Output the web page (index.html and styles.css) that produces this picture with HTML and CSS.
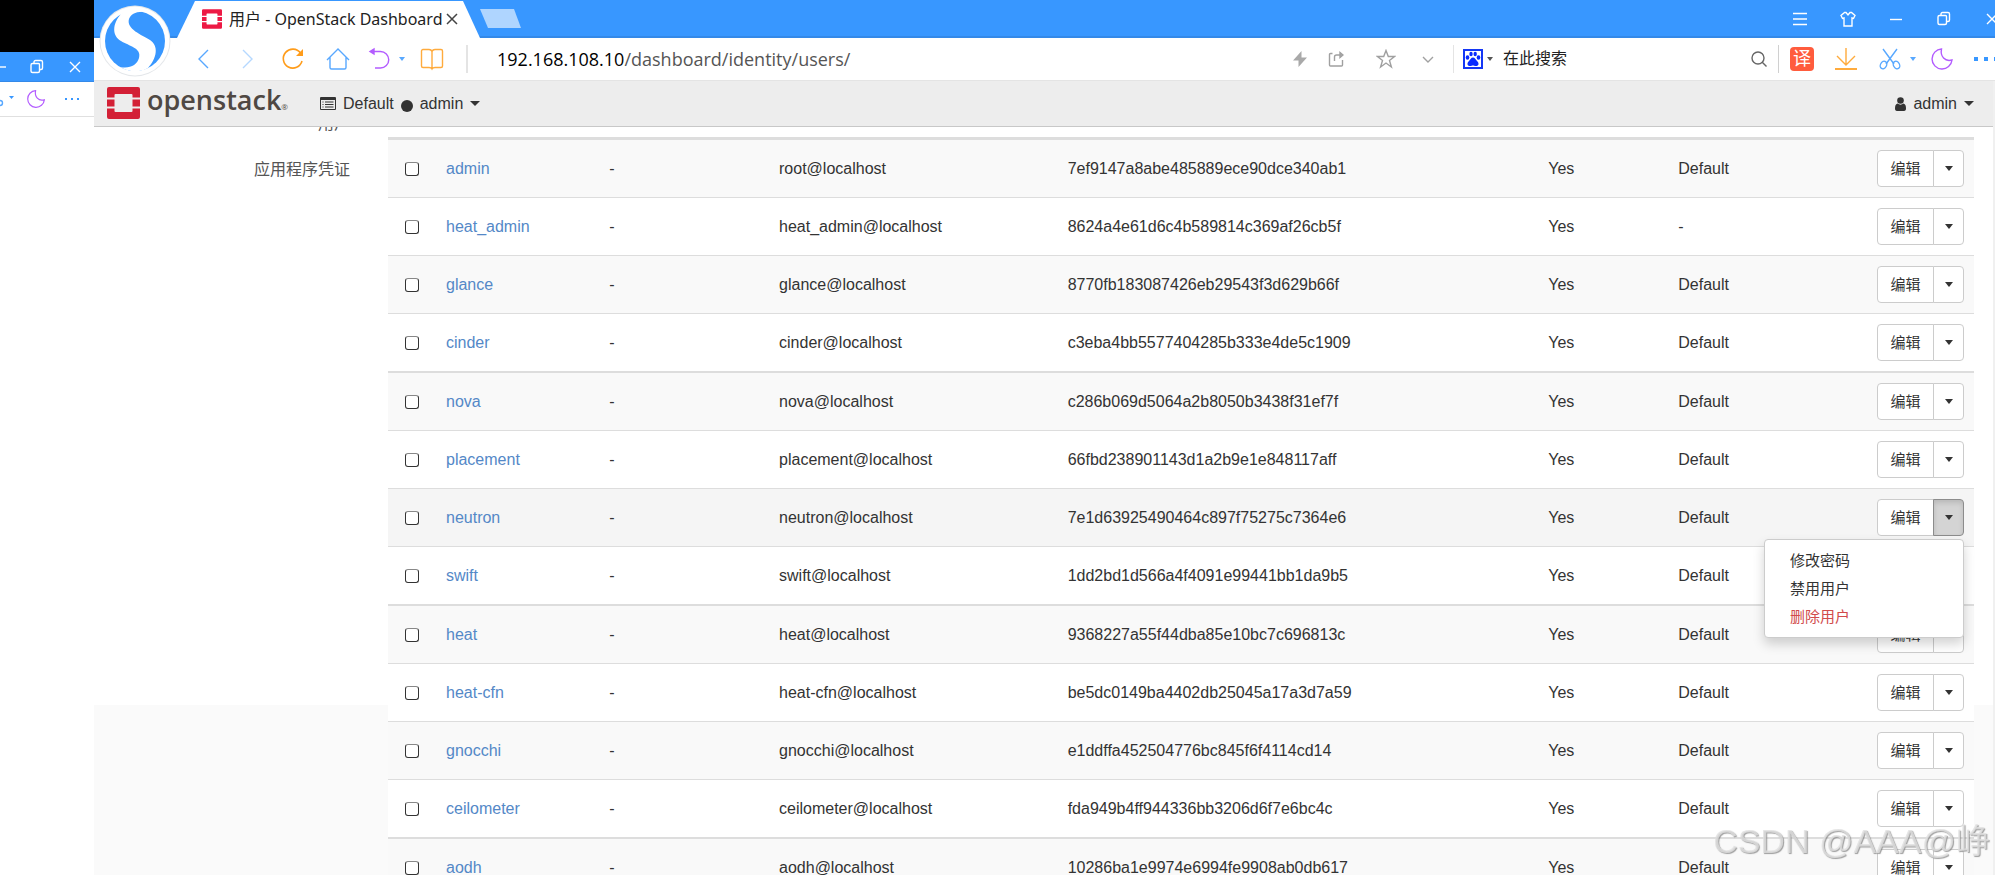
FILE: index.html
```
<!DOCTYPE html>
<html lang="zh-CN">
<head>
    <meta charset="UTF-8">
    <meta name="viewport" content="width=device-width, initial-scale=1.0">
    <title>用户 - OpenStack Dashboard</title>
    <link rel="stylesheet" href="styles.css">
</head>
<body>

<svg class="sprite" aria-hidden="true">
    <symbol id="i-restore" viewBox="0 0 16 16"><path d="M5 4V3a1.500 1.500 0 0 1 1.500-1.500H12A1.500 1.500 0 0 1 13.500 3v6a1.500 1.500 0 0 1-1.500 1.500h-1M3.500 4.500h6A1 1 0 0 1 10.500 5.500v6.500a1.500 1.500 0 0 1-1.500 1.500H3.500A1.500 1.500 0 0 1 2 12V6a1.500 1.500 0 0 1 1.500-1.500z"/></symbol>
    <symbol id="i-close" viewBox="0 0 16 16"><path d="M3 3l10 10M13 3L3 13"/></symbol>
    <symbol id="i-moon" viewBox="0 0 24 24"><path d="M11.500 2A10 10 0 1 0 22 13C15 15 10 9.500 11.500 2z"/></symbol>
    <symbol id="i-openstack" viewBox="0 0 33 32"><path d="M2 0h29a2 2 0 0 1 2 2v8.500h-7.500V8a1 1 0 0 0-1-1h-16a1 1 0 0 0-1 1v2.500H0V2a2 2 0 0 1 2-2zM0 12.500h7.500v7H0zM25.500 12.500H33v7h-7.500zM0 21.500h7.500V24a1 1 0 0 0 1 1h16a1 1 0 0 0 1-1v-2.500H33V30a2 2 0 0 1-2 2H2a2 2 0 0 1-2-2z"/></symbol>
</svg>

<!-- window behind -->
<aside class="back-window">
    <div class="back-desktop"></div>
    <div class="back-title">
        <svg class="line" width="16" height="16" viewBox="0 0 16 16"><path d="M0 8h15"/></svg>
        <svg class="line" width="16" height="16"><use href="#i-restore"/></svg>
        <svg class="line" width="16" height="16"><use href="#i-close"/></svg>
    </div>
    <div class="back-tools">
        <svg width="16" height="16" viewBox="0 0 16 16"><circle class="stroke-blue" cx="0" cy="12" r="2.500"/><path fill="#3897ff" d="M9 5h5l-2.500 3z"/></svg>
        <svg class="stroke-purple" width="20" height="20"><use href="#i-moon"/></svg>
        <svg class="fill-blue" width="16" height="16" viewBox="0 0 16 16"><path d="M1 7h2v2H1zM7 7h2v2H7zM13 7h2v2h-2z"/></svg>
    </div>
</aside>

<div class="browser">
    <header class="titlebar">
        <div class="tab">
            <svg width="20" height="20" fill="#ed1944"><use href="#i-openstack"/></svg>
            <span class="tab-title">用户 - OpenStack Dashboard</span>
            <button class="tab-close" aria-label="关闭标签页"><svg width="16" height="16"><use href="#i-close"/></svg></button>
        </div>
        <button class="new-tab" aria-label="新建标签页"></button>
        <div class="window-controls">
            <button aria-label="菜单"><svg class="line" width="16" height="16" viewBox="0 0 16 16"><path d="M1 2.500h14M1 8h14M1 13.500h14"/></svg></button>
            <button aria-label="皮肤"><svg class="line" width="16" height="16" viewBox="0 0 16 16"><path d="M4.500 1.500L1 4.500l1.500 3 1.500-.5v8h8V7l1.500.5 1.500-3-3.500-3h-1.500L8 4 6 1.500z"/></svg></button>
            <button aria-label="最小化"><svg class="line" width="16" height="16" viewBox="0 0 16 16"><path d="M2 8.500h12"/></svg></button>
            <button aria-label="还原"><svg class="line" width="16" height="16"><use href="#i-restore"/></svg></button>
            <button aria-label="关闭"><svg class="line" width="16" height="16"><use href="#i-close"/></svg></button>
        </div>
    </header>

    <svg class="browser-logo" viewBox="0 0 72 72">
        <circle cx="36" cy="36" r="35.500" fill="#e4e7ea"/>
        <circle cx="36" cy="36" r="34.500" fill="#fff"/>
        <circle cx="36" cy="36" r="30" fill="#3897ff"/>
        <path fill="#fff" d="M22 9C13 19 13 31 22 36c8 5 21 7 18 17-2 7-9 11-19 9 8 5 20 6 28 1C58 53 60 41 51 35 43 30 27 24 30 14c2-5 7-8 17-7C39 3 28 4 22 9z"/>
    </svg>

    <div class="toolbar">
        <nav class="tool-group">
            <button aria-label="后退"><svg class="stroke-blue" width="24" height="24" viewBox="0 0 24 24"><path d="M17 3L8 12l9 9"/></svg></button>
            <button aria-label="前进"><svg class="stroke-pale" width="24" height="24" viewBox="0 0 24 24"><path d="M7 3l9 9-9 9"/></svg></button>
            <button aria-label="刷新"><svg class="stroke-orange" width="24" height="24" viewBox="0 0 24 24"><path d="M19.500 6A9.500 9.500 0 1 0 21 14"/><path fill="#ff9c1a" stroke="none" d="M22 2v7h-7z"/></svg></button>
            <button aria-label="主页"><svg class="stroke-blue" width="24" height="24" viewBox="0 0 24 24"><path d="M1 13L12 2l11 11M4 10.500V20.500A1.500 1.500 0 0 0 5.500 22h13a1.500 1.500 0 0 0 1.500-1.500V10.500"/></svg></button>
            <button class="undo" aria-label="撤销"><svg class="stroke-purple" width="24" height="24" viewBox="0 0 24 24"><path d="M4 4.500h9.500a8 8 0 0 1 0 16.500H8"/><path fill="#b35cff" d="M7 2v5L3 4.500z"/></svg><i class="mini-caret"></i></button>
            <button aria-label="收藏夹"><svg class="stroke-gold" width="24" height="24" viewBox="0 0 24 24"><path d="M12 4.500C11.500 3 10.500 2.500 9 2.500H3A1.500 1.500 0 0 0 1.500 4v15A1.500 1.500 0 0 0 3 20.500h6c1.500 0 2.500.5 3 1.500.5-1 1.500-1.500 3-1.500h6a1.500 1.500 0 0 0 1.500-1.500V4A1.500 1.500 0 0 0 21 2.500h-6c-1.500 0-2.500.5-3 2zV22"/></svg></button>
        </nav>
        <div class="address" role="textbox" aria-label="地址">192.168.108.10<span>/dashboard/identity/users/</span></div>
        <div class="address-tools">
            <button aria-label="加速"><svg width="16" height="16" viewBox="0 0 16 16"><path fill="#a9a9a9" d="M9.500 0v6.500H15L6.500 16V9.500H1z"/></svg></button>
            <button aria-label="分享"><svg class="stroke-gray" width="16" height="16" viewBox="0 0 16 16"><path d="M4.500 2.500h-2a1 1 0 0 0-1 1V14a1 1 0 0 0 1 1h11a1 1 0 0 0 1-1V9M6.500 10V6a2 2 0 0 1 2-2H12"/><path fill="#a9a9a9" d="M12 1.500V6.500L15 4z"/></svg></button>
            <button aria-label="收藏"><svg class="stroke-gray" width="20" height="20" viewBox="0 0 20 20"><path d="M10 1.500l2.300 6H18.500l-5 4 1.900 6.500-5.400-4-5.400 4 1.900-6.500-5-4h6.200z"/></svg></button>
            <button aria-label="更多"><svg class="stroke-gray" width="16" height="16" viewBox="0 0 16 16"><path d="M3 6l5 5 5-5"/></svg></button>
        </div>
        <form class="search">
            <button type="button" class="engine" aria-label="搜索引擎"><svg width="20" height="20" viewBox="0 0 20 20"><path fill="#fff" stroke="#1437f5" stroke-width="2" d="M1 1h18v18H1z"/><g fill="#0a2cff"><ellipse cx="4.500" cy="8.500" rx="1.800" ry="2.200"/><ellipse cx="8" cy="5" rx="1.700" ry="2.200"/><ellipse cx="12.200" cy="5" rx="1.700" ry="2.200"/><ellipse cx="15.500" cy="8.500" rx="1.800" ry="2.200"/><path d="M10 8.500c2 0 2.500 2 4 3.500 3 3 1 5-1 5-1.500 0-2-.5-3-.5s-1.500.5-3 .5c-2 0-4-2-1-5 1.500-1.500 2-3.500 4-3.500z"/></g></svg><i class="mini-caret dark"></i></button>
            <input type="text" placeholder="在此搜索" aria-label="在此搜索">
            <button type="button" aria-label="搜索"><svg class="stroke-dark" width="16" height="16" viewBox="0 0 16 16"><circle cx="7" cy="7" r="6"/><path d="M11 11l4.500 4.500"/></svg></button>
        </form>
        <div class="extensions">
            <button class="translate">译</button>
            <button aria-label="下载"><svg class="stroke-gold" width="24" height="24" viewBox="0 0 24 24"><path d="M12 1v17M3 9l9 9 9-9"/><path stroke-width="2" d="M1 22h22"/></svg></button>
            <button aria-label="截图"><svg class="stroke-blue" width="24" height="24" viewBox="0 0 24 24"><path d="M5 2l11 15M19 2L8 17"/><ellipse cx="5.500" cy="18" rx="3" ry="4" transform="rotate(30 5.500 18)"/><ellipse cx="18.500" cy="18" rx="3" ry="4" transform="rotate(-30 18.500 18)"/></svg></button>
            <i class="mini-caret"></i>
            <button aria-label="夜间模式"><svg class="stroke-purple" width="24" height="24"><use href="#i-moon"/></svg></button>
            <button aria-label="更多工具"><svg class="fill-blue" width="24" height="24" viewBox="0 0 24 24"><path d="M0 10h4v4H0zM10 10h4v4h-4zM20 10h4v4h-4z"/></svg></button>
        </div>
    </div>

    <div class="page">
        <nav class="navbar">
            <a class="brand" href="#">
                <svg width="33" height="32" fill="#d32036"><use href="#i-openstack"/></svg>
                <span>openstack<small>®</small></span>
            </a>
            <button class="project">
                <svg width="16" height="13" viewBox="0 0 16 13"><path fill="#333" fill-rule="evenodd" d="M1 0h14a1 1 0 0 1 1 1v11a1 1 0 0 1-1 1H1a1 1 0 0 1-1-1V1a1 1 0 0 1 1-1zM1 3v9h14V3zM2.500 4.500h1v1h-1zM5 4.500h8.500v1H5zM2.500 7h1v1h-1zM5 7h8.500v1H5zM2.500 9.500h1v1h-1zM5 9.500h8.500v1H5z"/></svg>
                <span>Default</span><i class="dot"></i><span>admin</span><i class="caret"></i>
            </button>
            <button class="user">
                <svg width="11" height="14" viewBox="0 0 11 14"><circle cx="5.500" cy="3.500" r="3.300" fill="#333"/><path fill="#333" d="M2.500 6.500c2 1.500 4 1.500 6 0C10.500 7 11 9 11 11.500c0 1.500-.5 2.500-2 2.500H2c-1.500 0-2-1-2-2.500C0 9 .5 7 2.500 6.500z"/></svg>
                <span>admin</span><i class="caret"></i>
            </button>
        </nav>

        <div class="content">
            <ul class="side-menu">
                <li><a href="#">用户</a></li>
                <li><a href="#">应用程序凭证</a></li>
            </ul>
            <main>
                <table class="users">
                    <colgroup><col class="c-check"><col class="c-name"><col class="c-desc"><col class="c-mail"><col class="c-id"><col class="c-on"><col></colgroup>
                    <tbody>
                        <tr><td><input type="checkbox" aria-label="admin"></td><td><a href="#">admin</a></td><td>-</td><td>root@localhost</td><td>7ef9147a8abe485889ece90dce340ab1</td><td>Yes</td><td>Default</td><td><div class="actions"><button>编辑</button><button aria-label="更多操作"><i class="caret"></i></button></div></td></tr>
                        <tr><td><input type="checkbox" aria-label="heat_admin"></td><td><a href="#">heat_admin</a></td><td>-</td><td>heat_admin@localhost</td><td>8624a4e61d6c4b589814c369af26cb5f</td><td>Yes</td><td>-</td><td><div class="actions"><button>编辑</button><button aria-label="更多操作"><i class="caret"></i></button></div></td></tr>
                        <tr><td><input type="checkbox" aria-label="glance"></td><td><a href="#">glance</a></td><td>-</td><td>glance@localhost</td><td>8770fb183087426eb29543f3d629b66f</td><td>Yes</td><td>Default</td><td><div class="actions"><button>编辑</button><button aria-label="更多操作"><i class="caret"></i></button></div></td></tr>
                        <tr><td><input type="checkbox" aria-label="cinder"></td><td><a href="#">cinder</a></td><td>-</td><td>cinder@localhost</td><td>c3eba4bb5577404285b333e4de5c1909</td><td>Yes</td><td>Default</td><td><div class="actions"><button>编辑</button><button aria-label="更多操作"><i class="caret"></i></button></div></td></tr>
                        <tr><td><input type="checkbox" aria-label="nova"></td><td><a href="#">nova</a></td><td>-</td><td>nova@localhost</td><td>c286b069d5064a2b8050b3438f31ef7f</td><td>Yes</td><td>Default</td><td><div class="actions"><button>编辑</button><button aria-label="更多操作"><i class="caret"></i></button></div></td></tr>
                        <tr><td><input type="checkbox" aria-label="placement"></td><td><a href="#">placement</a></td><td>-</td><td>placement@localhost</td><td>66fbd238901143d1a2b9e1e848117aff</td><td>Yes</td><td>Default</td><td><div class="actions"><button>编辑</button><button aria-label="更多操作"><i class="caret"></i></button></div></td></tr>
                        <tr class="hovered"><td><input type="checkbox" aria-label="neutron"></td><td><a href="#">neutron</a></td><td>-</td><td>neutron@localhost</td><td>7e1d63925490464c897f75275c7364e6</td><td>Yes</td><td>Default</td><td>
                            <div class="actions open">
                                <button>编辑</button><button aria-label="更多操作" aria-expanded="true"><i class="caret"></i></button>
                                <ul class="dropdown">
                                    <li><a href="#">修改密码</a></li>
                                    <li><a href="#">禁用用户</a></li>
                                    <li><a class="danger" href="#">删除用户</a></li>
                                </ul>
                            </div>
                        </td></tr>
                        <tr><td><input type="checkbox" aria-label="swift"></td><td><a href="#">swift</a></td><td>-</td><td>swift@localhost</td><td>1dd2bd1d566a4f4091e99441bb1da9b5</td><td>Yes</td><td>Default</td><td><div class="actions"><button>编辑</button><button aria-label="更多操作"><i class="caret"></i></button></div></td></tr>
                        <tr><td><input type="checkbox" aria-label="heat"></td><td><a href="#">heat</a></td><td>-</td><td>heat@localhost</td><td>9368227a55f44dba85e10bc7c696813c</td><td>Yes</td><td>Default</td><td><div class="actions"><button>编辑</button><button aria-label="更多操作"><i class="caret"></i></button></div></td></tr>
                        <tr><td><input type="checkbox" aria-label="heat-cfn"></td><td><a href="#">heat-cfn</a></td><td>-</td><td>heat-cfn@localhost</td><td>be5dc0149ba4402db25045a17a3d7a59</td><td>Yes</td><td>Default</td><td><div class="actions"><button>编辑</button><button aria-label="更多操作"><i class="caret"></i></button></div></td></tr>
                        <tr><td><input type="checkbox" aria-label="gnocchi"></td><td><a href="#">gnocchi</a></td><td>-</td><td>gnocchi@localhost</td><td>e1ddffa452504776bc845f6f4114cd14</td><td>Yes</td><td>Default</td><td><div class="actions"><button>编辑</button><button aria-label="更多操作"><i class="caret"></i></button></div></td></tr>
                        <tr><td><input type="checkbox" aria-label="ceilometer"></td><td><a href="#">ceilometer</a></td><td>-</td><td>ceilometer@localhost</td><td>fda949b4ff944336bb3206d6f7e6bc4c</td><td>Yes</td><td>Default</td><td><div class="actions"><button>编辑</button><button aria-label="更多操作"><i class="caret"></i></button></div></td></tr>
                        <tr><td><input type="checkbox" aria-label="aodh"></td><td><a href="#">aodh</a></td><td>-</td><td>aodh@localhost</td><td>10286ba1e9974e6994fe9908ab0db617</td><td>Yes</td><td>Default</td><td><div class="actions"><button>编辑</button><button aria-label="更多操作"><i class="caret"></i></button></div></td></tr>
                    </tbody>
                </table>
            </main>
        </div>
    </div>
</div>

<div class="watermark">CSDN @AAA@峥</div>

</body>
</html>
```
FILE: styles.css
```
* {
    box-sizing: border-box;
}

body {
    font-family: "Liberation Sans", "Noto Sans CJK SC", sans-serif;
    font-size: 16px;
    line-height: 24px;
    color: #333;
    background-color: #fff;
    display: flex;
    height: 100vh;
    margin: 0;
    overflow: hidden;
}

button {
    display: flex;
    align-items: center;
    justify-content: center;
    padding: 0;
    border: none;
    background: none;
    color: inherit;
    font: inherit;
    cursor: pointer;
}

a {
    color: inherit;
    text-decoration: none;
}

ul {
    list-style: none;
    margin: 0;
    padding: 0;
}

svg {
    display: block;
    flex: none;
}

.sprite {
    position: absolute;
    width: 0;
    height: 0;
}

/* icon strokes */
.line, .stroke-blue, .stroke-pale, .stroke-orange, .stroke-gold, .stroke-purple, .stroke-gray, .stroke-dark {
    fill: none;
    stroke-width: 1.4;
}

.line { stroke: #fff; }
.stroke-blue { stroke: #58a8ff; }
.stroke-pale { stroke: #b5d8ff; }
.stroke-orange { stroke: #ff9c1a; stroke-width: 1.6; }
.stroke-gold { stroke: #ffab3d; }
.stroke-purple { stroke: #b35cff; }
.stroke-gray { stroke: #a0a0a0; }
.stroke-dark { stroke: #666; }
.fill-blue { fill: #3897ff; }

.caret {
    border-top: 5px solid #333;
    border-left: 5px solid transparent;
    border-right: 5px solid transparent;
}

.mini-caret {
    border-top: 4px solid #58a8ff;
    border-left: 3px solid transparent;
    border-right: 3px solid transparent;
}

.mini-caret.dark {
    border-top-color: #555;
}

/* window behind */
.back-window {
    flex: none;
    width: 94px;
    overflow: hidden;
}

.back-desktop {
    height: 52px;
    background-color: #000;
}

.back-title {
    display: flex;
    align-items: center;
    gap: 22px;
    height: 30px;
    padding-right: 11px;
    justify-content: flex-end;
    background-color: #3897ff;
    border-bottom: 1px solid #3489e8;
}

.back-tools {
    display: flex;
    align-items: center;
    justify-content: flex-end;
    gap: 10px;
    height: 35px;
    padding-right: 14px;
    border-bottom: 1px solid #e0e0e0;
}

.back-tools svg:last-child {
    margin-left: 8px;
}

/* browser chrome */
.browser {
    position: relative;
    display: flex;
    flex-direction: column;
    flex: 1;
    min-width: 0;
    overflow: hidden;
}

.titlebar {
    display: flex;
    flex: none;
    height: 38px;
    padding-left: 83px;
    background: linear-gradient(#3897ff 36px, #3489e8 36px);
}

.tab {
    display: flex;
    align-items: center;
    width: 303px;
    padding-left: 25px;
    background-color: #fff;
    clip-path: polygon(0 100%, 18px 1px, 286px 1px, 100% 100%);
}

.tab-title {
    margin-left: 7px;
    font-family: "Noto Sans", "Noto Sans CJK SC", sans-serif;
    font-size: 16px;
    color: #222;
    white-space: nowrap;
}

.tab-close {
    margin-left: 2px;
    stroke: #444;
    stroke-width: 1.5;
}

.new-tab {
    width: 41px;
    height: 19px;
    margin-top: 9px;
    background-color: #afd5ff;
    clip-path: polygon(0 0, 34px 0, 100% 100%, 8px 100%);
}

.window-controls {
    display: flex;
    margin-left: auto;
    margin-right: -21px;
}

.window-controls button {
    width: 48px;
}

.browser-logo {
    position: absolute;
    left: 5px;
    top: 5px;
    width: 72px;
    height: 72px;
}

.toolbar {
    display: flex;
    align-items: center;
    flex: none;
    height: 43px;
    padding-left: 97px;
    padding-bottom: 1px;
    background-color: #fff;
    border-bottom: 1px solid #e4e4e4;
}

.tool-group {
    display: flex;
    gap: 21px;
    padding-right: 22px;
    border-right: 2px solid #e4e4e4;
    height: 28px;
    align-items: center;
}

.tool-group .undo {
    margin-left: -4px;
    gap: 8px;
    margin-right: -6px;
}

.address {
    flex: 1;
    padding-left: 29px;
    font-family: "Open Sans", sans-serif;
    font-size: 18px;
    color: #000;
    white-space: nowrap;
}

.address span {
    color: #555;
}

.address-tools {
    display: flex;
    align-items: center;
    gap: 28px;
    padding-right: 17px;
}

.address-tools button:first-child {
    margin-right: -8px;
}

.address-tools button:nth-child(3) {
    margin: 0 -4px 0 4px;
}

.search {
    display: flex;
    align-items: center;
    width: 326px;
    height: 28px;
    padding: 0 11px 0 9px;
    border-left: 1px solid #e4e4e4;
    border-right: 1px solid #d0d0d0;
}

.engine {
    gap: 4px;
}

.search input {
    flex: 1;
    min-width: 0;
    margin-left: 10px;
    padding: 0;
    border: none;
    font: inherit;
}

.search input::placeholder {
    color: #222;
}

.extensions {
    display: flex;
    align-items: center;
    gap: 20px;
    padding-left: 11px;
    margin-right: -3px;
}

.extensions .mini-caret {
    margin: 0 -6px 0 -12px;
}

.translate {
    width: 24px;
    height: 24px;
    border-radius: 4px;
    background-color: #ff5c3d;
    color: #fff;
    font-size: 18px;
}

/* dashboard */
.page {
    flex: 1;
    min-height: 0;
    background-color: #fafafa;
    border-right: 2px solid #f0f0f0;
    overflow: hidden;
}

.navbar {
    position: relative;
    display: flex;
    align-items: center;
    height: 46px;
    padding: 0 19px 0 13px;
    background-color: #ededed;
    border-bottom: 1px solid #c8c8c8;
    z-index: 1;
}

.brand {
    display: flex;
    align-items: center;
    gap: 7px;
    margin-bottom: 1px;
    font-family: "Open Sans", sans-serif;
    font-size: 27px;
    font-weight: 600;
    color: #4f4843;
}

.brand small {
    font-size: 8px;
    font-weight: 400;
}

.project, .user {
    gap: 7px;
}

.project {
    margin-left: 32px;
}

.dot {
    width: 12px;
    height: 12px;
    margin-top: 4px;
    border-radius: 50%;
    background-color: #333;
}

.user {
    margin-left: auto;
}

.content {
    display: flex;
    height: calc(100vh - 297px);
    background-color: #fff;
}

.side-menu {
    flex: none;
    width: 294px;
    margin-top: -26px;
    padding-right: 38px;
    text-align: right;
    color: #555;
}

.side-menu a {
    display: block;
    line-height: 46px;
}

main {
    flex: 1;
    min-width: 0;
    padding: 10px 19px 0 0;
}

.users {
    width: 100%;
    table-layout: fixed;
    border-collapse: separate;
    border-spacing: 0;
    background-color: #fff;
}

.c-check { width: 50px; }
.c-name { width: 10.3%; }
.c-desc { width: 10.7%; }
.c-mail { width: 18.2%; }
.c-id { width: 30.3%; }
.c-on { width: 8.2%; }

.users td {
    height: 58px;
    padding: 0 8px;
    border-top: 1px solid #ddd;
}

.users tr:nth-child(4n+1) td {
    height: 59px;
    border-top-width: 2px;
}

.users tr:first-child td {
    height: 60px;
    border-top-width: 3px;
}

.users tr:nth-child(odd) {
    background-color: #f9f9f9;
}

.users tr.hovered {
    background-color: #f5f5f5;
}

.users td:first-child {
    padding-left: 17px;
}

.users td a {
    color: #5488c7;
}

.users input {
    display: block;
    appearance: none;
    width: 14px;
    height: 14px;
    margin: 0;
    border: 1px solid #333;
    border-top-color: #888;
    border-radius: 3px;
    background-color: #fff;
}

.actions {
    position: relative;
    display: flex;
    justify-content: flex-end;
    padding-right: 2px;
    font-size: 15px;
}

.actions button {
    width: 57px;
    height: 37px;
    border: 1px solid #ccc;
    border-radius: 4px 0 0 4px;
    background-color: #fff;
}

.actions button + button {
    width: 31px;
    margin-left: -1px;
    border-radius: 0 4px 4px 0;
}

.actions.open button + button {
    background-color: #d4d4d4;
    border-color: #8c8c8c;
    box-shadow: inset 0 3px 5px rgba(0, 0, 0, 0.125);
}

.actions .caret {
    border-top-width: 5px;
    border-left-width: 4px;
    border-right-width: 4px;
}

.dropdown {
    position: absolute;
    top: 40px;
    right: 2px;
    width: 200px;
    padding: 7px 0 6px;
    background-color: #fff;
    border: 1px solid #ccc;
    border-radius: 4px;
    box-shadow: 0 6px 12px rgba(0, 0, 0, 0.175);
    z-index: 1;
}

.users .dropdown a {
    display: block;
    padding: 0 25px;
    line-height: 28px;
    color: #333;
}

.users .dropdown .danger {
    color: #d14b4b;
}

.watermark {
    position: fixed;
    right: 5px;
    bottom: 10px;
    font-size: 34px;
    line-height: 48px;
    color: rgba(225, 225, 225, 0.8);
    text-shadow: 1px 1px 1px rgba(120, 120, 120, 0.7);
    pointer-events: none;
}
```
